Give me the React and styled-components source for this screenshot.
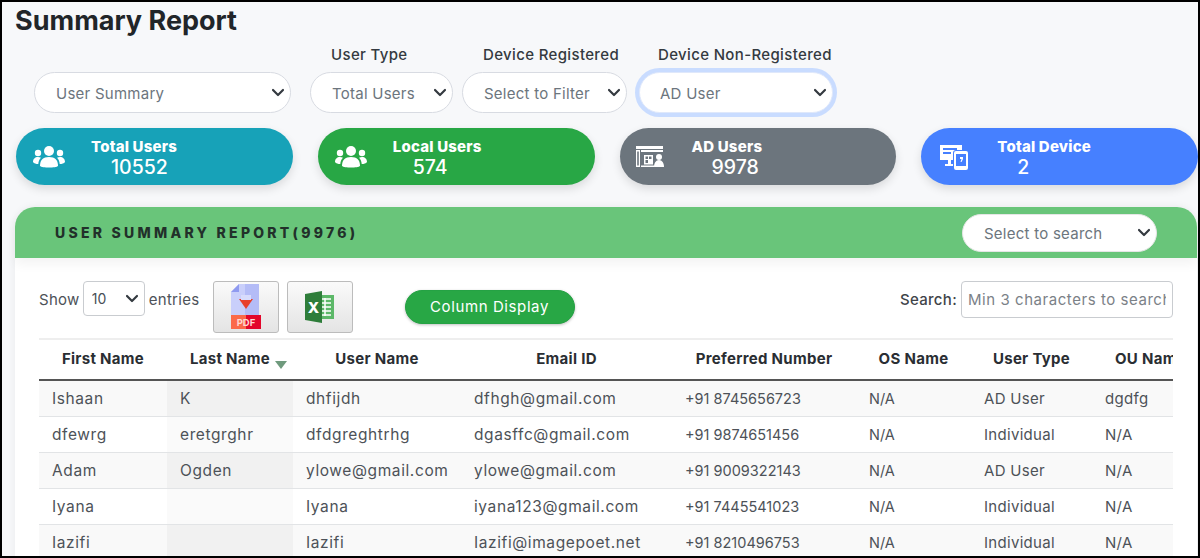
import React from "react";
import styled, { createGlobalStyle, css } from "styled-components";

const GlobalStyle = createGlobalStyle`
  html, body {
    margin: 0;
    height: 558px;
    overflow: hidden;
    background: #f7f8fa;
  }
  * { box-sizing: border-box; }
`;

const chevron = `url("data:image/svg+xml,%3Csvg xmlns='http://www.w3.org/2000/svg' viewBox='0 0 14 9'%3E%3Cpath d='M2 2l5 5 5-5' fill='none' stroke='%23343a40' stroke-width='2.2' stroke-linecap='round' stroke-linejoin='round'/%3E%3C/svg%3E")`;

const Page = styled.div`
  width: 1200px;
  height: 558px;
  overflow: hidden;
  border: 2px solid #000;
  padding: 0 0 0 13px;
  background: #f7f8fa;
  color: #212529;
  font-family: Inter, "Open Sans", sans-serif;
`;

const Title = styled.h1`
  margin: 0;
  height: 38px;
  padding-top: 3px;
  font-size: 27px;
  line-height: 32px;
  font-weight: 700;
  color: #212529;
`;

const FilterRow = styled.div`
  display: flex;
  align-items: flex-end;
  padding-left: 19px;
`;

const Field = styled.div`
  display: flex;
  flex-direction: column;
  width: ${(p) => p.$width}px;
  margin-right: ${(p) => p.$gap}px;
`;

const FieldLabel = styled.label`
  height: 32px;
  padding-left: ${(p) => p.$pad || 21}px;
  font-size: 15px;
  line-height: 30px;
  font-weight: 500;
  white-space: nowrap;
  letter-spacing: 0.35px;
  color: #343a40;
`;

const PillSelect = styled.select`
  appearance: none;
  width: 100%;
  height: 41px;
  padding: 1px 30px 0 ${(p) => (p.$focused ? 20 : 21)}px;
  border: 1px solid ${(p) => (p.$focused ? "#dfe8fb" : "#d8dbe2")};
  border-radius: 21px;
  background: #fff ${chevron} no-repeat right 5px center / 14px 9px;
  color: #6c757d;
  font-family: inherit;
  font-size: 15px;
  letter-spacing: 0.25px;
  outline: none;
  box-shadow: ${(p) => (p.$focused ? "0 0 0 4px #c9dcff" : "none")};
`;

const Stats = styled.div`
  display: grid;
  grid-template-columns: repeat(4, 1fr);
  column-gap: 25px;
  width: 1182px;
  margin: 15px 0 0 1px;
`;

const StatCard = styled.div`
  display: flex;
  align-items: center;
  height: 57px;
  padding-left: ${(p) => p.$pad}px;
  border-radius: 29px;
  background: ${(p) => p.$bg};
  color: #fff;
  box-shadow: 0 4px 10px rgba(0, 0, 0, 0.12);
`;

const StatIcon = styled.svg`
  flex: none;
  width: 34px;
  height: 30px;
  margin-right: ${(p) => p.$gap}px;
  fill: #fff;
`;

const StatText = styled.div`
  display: flex;
  flex-direction: column;
  padding-top: 3px;
`;

const StatName = styled.span`
  font-size: 15px;
  line-height: 18px;
  font-weight: 800;
  letter-spacing: 0.2px;
`;

const StatValue = styled.span`
  padding-left: 20px;
  font-size: 19.5px;
  line-height: 22px;
  font-weight: 500;
`;

const Report = styled.section`
  width: 1182px;
  margin-top: 22px;
  height: 400px;
  background: #fff;
  border-radius: 20px 20px 0 0;
  box-shadow: 0 0 8px rgba(0, 0, 0, 0.06);
`;

const ReportHeader = styled.header`
  display: flex;
  align-items: center;
  justify-content: space-between;
  height: 51px;
  padding: 0 40px 0 40px;
  border-radius: 20px 20px 0 0;
  background: #69c57a;
  box-shadow: 0 6px 12px rgba(0, 0, 0, 0.05);
`;

const ReportTitle = styled.h2`
  margin: 0;
  font-size: 14px;
  font-weight: 800;
  letter-spacing: 3.25px;
  color: #22302a;
`;

const SearchSelect = styled(PillSelect)`
  flex: none;
  width: 195px;
  height: 38px;
  border: 1px solid #e6e6e6;
`;

const ReportBody = styled.div`
  padding: 23px 24px 0 24px;
`;

const Toolbar = styled.div`
  display: flex;
  align-items: flex-start;
  height: 57px;
`;

const ShowLabel = styled.span`
  font-size: 15px;
  line-height: 37px;
  color: #4d5258;
  letter-spacing: 0.3px;
`;

const PageSize = styled.select`
  appearance: none;
  width: 62px;
  height: 35px;
  margin: 0 4px 0 3px;
  padding: 0 20px 0 8px;
  border: 1px solid #c9ccd0;
  border-radius: 4px;
  background: #fff ${chevron} no-repeat right 5px center / 14px 9px;
  color: #495057;
  font-family: inherit;
  font-size: 14px;
`;

const ExportButton = styled.button`
  display: flex;
  align-items: center;
  justify-content: center;
  width: 66px;
  height: 52px;
  margin-left: ${(p) => p.$left}px;
  padding: 0;
  border: 1px solid #bcbcbc;
  border-radius: 3px;
  background: linear-gradient(#fafafa, #e4e4e4);
`;

const ColumnButton = styled.button`
  width: 170px;
  height: 34px;
  margin: 9px 0 0 52px;
  padding: 0 0 2px;
  border: 1px solid #25a244;
  border-radius: 17px;
  background: #28a745;
  color: #fff;
  font-family: inherit;
  font-size: 15px;
  letter-spacing: 0.6px;
  box-shadow: 0 1px 3px rgba(0, 0, 0, 0.25);
`;

const SearchBox = styled.div`
  display: flex;
  align-items: flex-start;
  margin-left: auto;
`;

const SearchLabel = styled.label`
  margin-right: 4px;
  font-size: 15px;
  line-height: 37px;
  font-weight: 500;
  letter-spacing: 0.3px;
  color: #3f4449;
`;

const SearchInput = styled.input`
  width: 212px;
  height: 37px;
  padding: 0 6px;
  border: 1px solid #c9ccd0;
  border-radius: 4px;
  background: #fff;
  font-family: inherit;
  font-size: 15px;
  letter-spacing: 0.55px;
  &::placeholder { color: #7b8187; opacity: 1; }
`;

const TableClip = styled.div`
  width: 1134px;
  overflow: hidden;
`;

const Table = styled.table`
  width: 1170px;
  table-layout: fixed;
  border-collapse: collapse;
  border-top: 2px solid #eeeeee;
`;

const HeadCell = styled.th`
  height: 41px;
  padding: 0 0 2px;
  border-bottom: 2px solid #555;
  font-size: 15px;
  font-weight: 700;
  letter-spacing: 0.3px;
  text-align: center;
  white-space: nowrap;
  color: #2a2e33;
`;

const SortMark = styled.i`
  display: inline-block;
  margin: 0 -17px 0 5px;
  vertical-align: -5px;
  border-left: 6px solid transparent;
  border-right: 6px solid transparent;
  border-top: 8px solid #6f9a7d;
`;

const Row = styled.tr`
  background: ${(p) => (p.$odd ? "#f9f9f9" : "#fff")};
`;

const cellFits = {
  wide: css`
    font-size: 15.5px;
    letter-spacing: 0.6px;
  `,
  mid: css`
    font-size: 15px;
    letter-spacing: 0.3px;
  `,
  tight: css`
    font-size: 14.5px;
    letter-spacing: 0;
  `,
};

const Cell = styled.td`
  height: 36px;
  padding: 0 0 0 13px;
  border-bottom: 1px solid #e2e4e6;
  white-space: nowrap;
  color: #4d5258;
  background: ${(p) => (p.$sorted ? (p.$odd ? "#f1f1f1" : "#fafafa") : "transparent")};
  ${(p) => cellFits[p.$fit]}
`;

const UsersIcon = ({ gap }) => (
  <StatIcon $gap={gap} viewBox="0 0 34 30">
    <circle cx="17" cy="9" r="5" />
    <circle cx="6" cy="11" r="3.2" />
    <circle cx="28" cy="11" r="3.2" />
    <path d="M8 24c0-6 3-9 9-9s9 3 9 9c-2 2-16 2-18 0z" />
    <path d="M1 20c0-3 2-5 5-5 1 0 2 .3 3 .8C7.300 17.500 6.500 19.500 6.300 22 4 22 2 21.500 1 20z" />
    <path d="M33 20c0-3-2-5-5-5-1 0-2 .3-3 .8 1.700 1.700 2.500 3.700 2.700 6.200 2.300 0 4.300-.5 5.300-2z" />
  </StatIcon>
);

const AdIcon = ({ gap }) => (
  <StatIcon $gap={gap} viewBox="0 0 34 30">
    <path d="M3 4h27v3H3z" />
    <path fillRule="evenodd" d="M3 8h4v17H3zM4.200 9.500v14h1.600v-14z" />
    <path fillRule="evenodd" d="M8 8h22v2H8zM8 23.500h13V25H8zM11 13h9v9.500h-9zM12.500 14.500v2.500h2.500v-2.500zM16 14.500v2.500h2.500v-2.500zM12.500 18v3h2.500v-3z" />
    <circle cx="26" cy="15" r="3" />
    <path d="M21 25c0-4 2-7 5-7s5 3 5 7z" />
  </StatIcon>
);

const DevicesIcon = ({ gap }) => (
  <StatIcon $gap={gap} viewBox="0 0 34 30">
    <path fillRule="evenodd" d="M2 3h22v5h-6a3 3 0 0 0-3 3v7H2zM5 6v2h14V6zM5 10v2h8v-2z" />
    <path d="M7 22h8v2H7z" />
    <path d="M10 18h3v4h-3z" />
    <path fillRule="evenodd" d="M18 9h10a2 2 0 0 1 2 2v15a2 2 0 0 1-2 2H18a2 2 0 0 1-2-2V11a2 2 0 0 1 2-2zM18 12v12h10V12zM22 15h3v2l-1.500 3h-1l1-3H22z" />
  </StatIcon>
);

const PdfIcon = () => (
  <svg width="30" height="46" viewBox="0 0 30 46">
    <path d="M8 0h20v32H0V8z" fill="#c9cffb" />
    <path d="M8 0v8H0z" fill="#8f9af0" />
    <path d="M14 0h14v32H14z" fill="#b4bcf7" />
    <path d="M8 15h14l-7 10z" fill="#e8402c" />
    <path d="M10 11h10v5H10z" fill="#d8dcfc" />
    <path d="M0 31h15v14H0z" fill="#fb6a4a" />
    <path d="M15 31h15v14H15z" fill="#e3062b" />
    <text x="15" y="42" textAnchor="middle" fontSize="9.500" fontWeight="700" fontFamily="Inter, sans-serif" fill="#ffd9d2">PDF</text>
  </svg>
);

const ExcelIcon = () => (
  <svg width="30" height="32" viewBox="0 0 30 32">
    <path d="M12 4h17v24H12z" fill="#5cb868" />
    <path d="M16 8h10M16 12h10M16 16h10M16 20h10M16 24h10M20 7v18" stroke="#fff" strokeWidth="1.500" />
    <path d="M0 3l17-3v32L0 29z" fill="#2e7d3a" />
    <text x="8.500" y="22" textAnchor="middle" fontSize="15" fontWeight="800" fontFamily="Inter, sans-serif" fill="#fff">X</text>
  </svg>
);

const stats = [
  { name: "Total Users", value: "10552", bg: "#17a2b8", pad: 16, gap: 25, Icon: UsersIcon },
  { name: "Local Users", value: "574", bg: "#28a745", pad: 16, gap: 25, Icon: UsersIcon },
  { name: "AD Users", value: "9978", bg: "#6c757d", pad: 13, gap: 25, Icon: AdIcon },
  { name: "Total Device", value: "2", bg: "#4680ff", pad: 17, gap: 25, Icon: DevicesIcon },
];

const columns = [
  { title: "First Name", width: 128, fit: "wide" },
  { title: "Last Name", width: 126, fit: "wide", sorted: true },
  { title: "User Name", width: 168, fit: "wide" },
  { title: "Email ID", width: 211, fit: "wide" },
  { title: "Preferred Number", width: 184, fit: "tight" },
  { title: "OS Name", width: 115, fit: "tight" },
  { title: "User Type", width: 121, fit: "mid" },
  { title: "OU Name", width: 117, fit: "mid" },
];

const rows = [
  ["Ishaan", "K", "dhfijdh", "dfhgh@gmail.com", "+91 8745656723", "N/A", "AD User", "dgdfg"],
  ["dfewrg", "eretgrghr", "dfdgreghtrhg", "dgasffc@gmail.com", "+91 9874651456", "N/A", "Individual", "N/A"],
  ["Adam", "Ogden", "ylowe@gmail.com", "ylowe@gmail.com", "+91 9009322143", "N/A", "AD User", "N/A"],
  ["Iyana", "", "Iyana", "iyana123@gmail.com", "+91 7445541023", "N/A", "Individual", "N/A"],
  ["Iazifi", "", "Iazifi", "Iazifi@imagepoet.net", "+91 8210496753", "N/A", "Individual", "N/A"],
];

export default function App() {
  return (
    <Page>
      <GlobalStyle />
      <Title>Summary Report</Title>

      <FilterRow>
        <Field $width={257} $gap={19}>
          <PillSelect defaultValue="User Summary">
            <option>User Summary</option>
          </PillSelect>
        </Field>
        <Field $width={143} $gap={9}>
          <FieldLabel>User Type</FieldLabel>
          <PillSelect defaultValue="Total Users">
            <option>Total Users</option>
          </PillSelect>
        </Field>
        <Field $width={165} $gap={12}>
          <FieldLabel>Device Registered</FieldLabel>
          <PillSelect defaultValue="Select to Filter">
            <option>Select to Filter</option>
          </PillSelect>
        </Field>
        <Field $width={194} $gap={0}>
          <FieldLabel $pad={19}>Device Non-Registered</FieldLabel>
          <PillSelect $focused defaultValue="AD User">
            <option>AD User</option>
          </PillSelect>
        </Field>
      </FilterRow>

      <Stats>
        {stats.map(({ name, value, bg, pad, gap, Icon }) => (
          <StatCard key={name} $bg={bg} $pad={pad}>
            <Icon gap={gap} />
            <StatText>
              <StatName>{name}</StatName>
              <StatValue>{value}</StatValue>
            </StatText>
          </StatCard>
        ))}
      </Stats>

      <Report>
        <ReportHeader>
          <ReportTitle>USER SUMMARY REPORT(9976)</ReportTitle>
          <SearchSelect defaultValue="Select to search">
            <option>Select to search</option>
          </SearchSelect>
        </ReportHeader>

        <ReportBody>
          <Toolbar>
            <ShowLabel>Show</ShowLabel>
            <PageSize defaultValue="10">
              <option>10</option>
            </PageSize>
            <ShowLabel>entries</ShowLabel>
            <ExportButton $left={13}>
              <PdfIcon />
            </ExportButton>
            <ExportButton $left={8}>
              <ExcelIcon />
            </ExportButton>
            <ColumnButton>Column Display</ColumnButton>
            <SearchBox>
              <SearchLabel>Search:</SearchLabel>
              <SearchInput placeholder="Min 3 characters to search" />
            </SearchBox>
          </Toolbar>

          <TableClip>
            <Table>
              <colgroup>
                {columns.map((c) => (
                  <col key={c.title} width={c.width} />
                ))}
              </colgroup>
              <thead>
                <tr>
                  {columns.map((c) => (
                    <HeadCell key={c.title}>
                      {c.title}
                      {c.sorted && <SortMark />}
                    </HeadCell>
                  ))}
                </tr>
              </thead>
              <tbody>
                {rows.map((row, i) => (
                  <Row key={row[3]} $odd={i % 2 === 0}>
                    {row.map((text, j) => (
                      <Cell key={j} $fit={columns[j].fit} $sorted={j === 1} $odd={i % 2 === 0}>
                        {text}
                      </Cell>
                    ))}
                  </Row>
                ))}
              </tbody>
            </Table>
          </TableClip>
        </ReportBody>
      </Report>
    </Page>
  );
}
